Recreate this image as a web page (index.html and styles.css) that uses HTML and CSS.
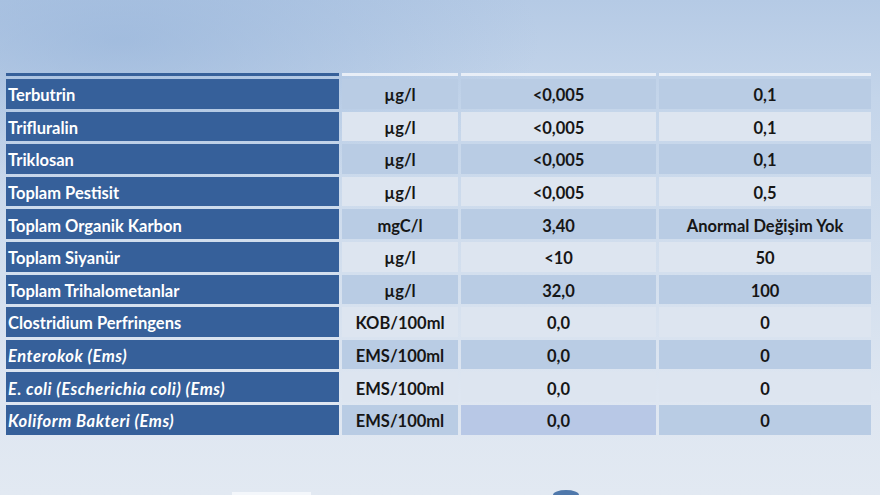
FILE: index.html
```html
<!DOCTYPE html>
<html lang="tr">
<head>
<meta charset="utf-8">
<title>Su Analiz Sonuçları</title>
<link rel="stylesheet" href="styles.css">
</head>
<body>
<div class="page">
  <div class="table">
    <div class="cell name head"></div>
    <div class="cell head light"></div>
    <div class="cell head light"></div>
    <div class="cell head light"></div>

    <div class="cell name">Terbutrin</div>
    <div class="cell dark">µg/l</div>
    <div class="cell dark">&lt;0,005</div>
    <div class="cell dark">0,1</div>

    <div class="cell name">Trifluralin</div>
    <div class="cell pale">µg/l</div>
    <div class="cell pale">&lt;0,005</div>
    <div class="cell pale">0,1</div>

    <div class="cell name">Triklosan</div>
    <div class="cell dark">µg/l</div>
    <div class="cell dark">&lt;0,005</div>
    <div class="cell dark">0,1</div>

    <div class="cell name">Toplam Pestisit</div>
    <div class="cell pale">µg/l</div>
    <div class="cell pale">&lt;0,005</div>
    <div class="cell pale">0,5</div>

    <div class="cell name">Toplam Organik Karbon</div>
    <div class="cell dark">mgC/l</div>
    <div class="cell dark">3,40</div>
    <div class="cell dark">Anormal Değişim Yok</div>

    <div class="cell name">Toplam Siyanür</div>
    <div class="cell pale">µg/l</div>
    <div class="cell pale">&lt;10</div>
    <div class="cell pale">50</div>

    <div class="cell name">Toplam Trihalometanlar</div>
    <div class="cell dark">µg/l</div>
    <div class="cell dark">32,0</div>
    <div class="cell dark">100</div>

    <div class="cell name">Clostridium Perfringens</div>
    <div class="cell pale">KOB/100ml</div>
    <div class="cell pale">0,0</div>
    <div class="cell pale">0</div>

    <div class="cell name italic">Enterokok (Ems)</div>
    <div class="cell dark">EMS/100ml</div>
    <div class="cell dark">0,0</div>
    <div class="cell dark">0</div>

    <div class="cell name italic">E. coli (Escherichia coli) (Ems)</div>
    <div class="cell pale">EMS/100ml</div>
    <div class="cell pale">0,0</div>
    <div class="cell pale">0</div>

    <div class="cell name italic">Koliform Bakteri (Ems)</div>
    <div class="cell dark">EMS/100ml</div>
    <div class="cell dark violet">0,0</div>
    <div class="cell dark">0</div>
  </div>
  <div class="footer">
    <div class="white-box"></div>
    <div class="blue-dot"></div>
  </div>
</div>
</body>
</html>
```
FILE: styles.css
```css
html, body {
  margin: 0;
  padding: 0;
}
body {
  width: 880px;
  height: 495px;
  overflow: hidden;
  font-family: "Lato", "Open Sans", sans-serif;
}
.page {
  width: 880px;
  height: 495px;
  box-sizing: border-box;
  padding: 73px 0 0 6px;
  background:
    radial-gradient(ellipse 420px 160px at 120px 40px, rgba(145,176,216,0.6), rgba(145,176,216,0) 100%),
    linear-gradient(180deg, #b5cae5 0%, #c4d5ea 20%, #d3dfee 55%, #dee6f1 80%, #e2e9f2 100%);
  display: flex;
  flex-direction: column;
}
.table {
  width: 865px;
  display: grid;
  grid-template-columns: 333px 116px 195px 212px;
  grid-template-rows: 3px;
  grid-auto-rows: 29.6px;
  column-gap: 3px;
  row-gap: 3px;
}
.cell {
  display: flex;
  align-items: center;
  justify-content: center;
  font-weight: 700;
  font-size: 16.5px;
  color: #161616;
  white-space: nowrap;
  padding-top: 3px;
  box-sizing: border-box;
}
.name {
  justify-content: flex-start;
  padding-left: 2px;
  background: #36609a;
  color: #ffffff;
}
.italic {
  font-style: italic;
  letter-spacing: 0.55px;
}
.head {
  padding: 0;
}
.light {
  background: #e8eef7;
}
.dark {
  background: #b9cce4;
}
.pale {
  background: #dde5f0;
}
.violet {
  background: #b8c8e6;
}
.footer {
  flex: 1;
  display: flex;
  align-items: flex-end;
  padding-left: 226px;
  gap: 242px;
}
.white-box {
  width: 79px;
  height: 3px;
  background: #f4f7fb;
}
.blue-dot {
  width: 26px;
  height: 5px;
  border-radius: 13px 13px 0 0 / 5px 5px 0 0;
  background: #4f78ab;
}
```
